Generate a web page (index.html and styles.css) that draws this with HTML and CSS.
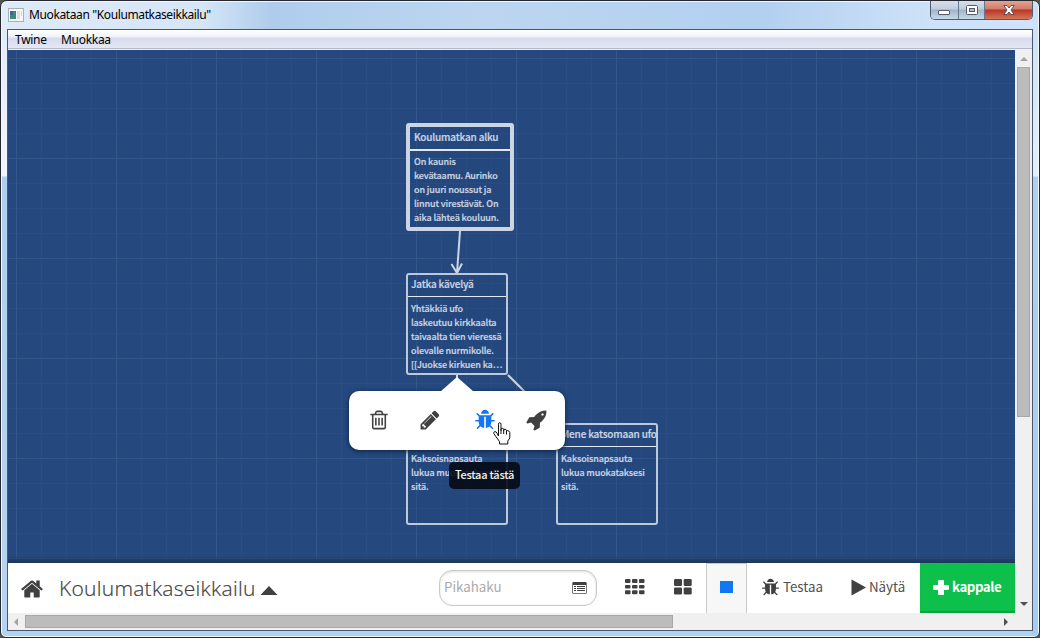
FILE: index.html
```
<!DOCTYPE html>
<html lang="fi">
<head>
<meta charset="utf-8">
<title>Muokataan "Koulumatkaseikkailu"</title>
<link rel="stylesheet" href="styles.css">
</head>
<body>
<svg class="defs" width="0" height="0">
  <symbol id="home" viewBox="0 0 1792 1792"><path d="M1472 992v480q0 26-19 45t-45 19h-384v-384h-256v384h-384q-26 0-45-19t-19-45v-480q0-1 .5-3t.5-3l575-474 575 474q1 2 1 6zm223-69l-62 74q-8 9-21 11h-3q-13 0-21-7l-692-577-692 577q-12 8-24 7-13-2-21-11l-62-74q-8-10-7-23.500t11-21.500l719-599q32-26 76-26t76 26l244 204v-195q0-14 9-23t23-9h192q14 0 23 9t9 23v408l219 182q10 8 11 21.500t-7 23.500z"/></symbol>
  <symbol id="pencil" viewBox="0 0 1792 1792"><path d="M491 1536l91-91-235-235-91 91v107h128v128h107zm523-928q0-22-22-22-10 0-17 7l-542 542q-7 7-7 17 0 22 22 22 10 0 17-7l542-542q7-7 7-17zm-54-192l416 416-832 832h-416v-416zm683 96q0 53-37 90l-166 166-416-416 166-165q36-38 90-38 53 0 91 38l235 234q37 39 37 91z"/></symbol>
  <symbol id="bug" viewBox="0 0 1792 1792"><path d="M1696 960q0 26-19 45t-45 19h-224q0 171-67 290l208 209q19 19 19 45t-19 45q-18 19-45 19t-45-19l-198-197q-5 5-15 13t-42 28.500-65 36.500-82 29-97 13v-896h-128v896q-51 0-101.500-13.500t-87-33-66-39-43.500-32.500l-15-14-183 207q-20 21-48 21-24 0-43-16-19-18-20.500-44.500t15.500-46.500l202-227q-58-114-58-274h-224q-26 0-45-19t-19-45 19-45 45-19h224v-294l-173-173q-19-19-19-45t19-45 45-19 45 19l173 173h844l173-173q19-19 45-19t45 19 19 45-19 45l-173 173v294h224q26 0 45 19t19 45zm-480-576h-640q0-133 93.500-226.500t226.500-93.500 226.500 93.500 93.500 226.500z"/></symbol>
  <symbol id="trash" viewBox="0 0 1792 1792"><path d="M704 736v576q0 14-9 23t-23 9h-64q-14 0-23-9t-9-23v-576q0-14 9-23t23-9h64q14 0 23 9t9 23zm256 0v576q0 14-9 23t-23 9h-64q-14 0-23-9t-9-23v-576q0-14 9-23t23-9h64q14 0 23 9t9 23zm256 0v576q0 14-9 23t-23 9h-64q-14 0-23-9t-9-23v-576q0-14 9-23t23-9h64q14 0 23 9t9 23zm128 724v-948h-896v948q0 22 7 40.500t14.500 27 10.500 8.500h832q3 0 10.500-8.500t14.500-27 7-40.500zm-672-1076h448l-48-117q-7-9-17-11h-317q-10 2-17 11zm928 32v64q0 14-9 23t-23 9h-96v948q0 83-47 143.500t-113 60.500h-832q-66 0-113-58.500t-47-141.500v-952h-96q-14 0-23-9t-9-23v-64q0-14 9-23t23-9h309l70-167q15-37 54-63t79-26h320q40 0 79 26t54 63l70 167h309q14 0 23 9t9 23z"/></symbol>
  <symbol id="rocket" viewBox="0 0 1792 1792"><path d="M1440 448q0-40-28-68t-68-28-68 28-28 68 28 68 68 28 68-28 28-68zm224-288q0 249-75.500 430.500t-253.500 360.500q-81 80-195 176l-20 379q-2 16-16 26l-384 224q-7 4-16 4-12 0-23-9l-64-64q-13-14-8-32l85-276-281-281-276 85q-3 1-9 1-14 0-23-9l-64-64q-17-19-5-39l224-384q10-14 26-16l379-20q96-114 176-195 188-187 358-258t431-71q14 0 24 9.500t10 22.500z"/></symbol>
</svg>
<div class="window">
  <header class="titlebar">
    <svg class="app-icon" width="16" height="14" viewBox="0 0 16 14"><path fill="#a6b0b8" d="M0 0h16v14H0z"/><path fill="#f6f7f7" d="M1 1h14v12H1z"/><path fill="#3c8a78" d="M2 3h6v8H2z"/><path fill="#3a6798" d="M2 3h3v4H2z"/><path fill="#dde0e0" d="M9 3h3v8H9z"/><path fill="#c4dcc6" d="M13 3h1v5h-1z"/></svg>
    <h1 class="win-title">Muokataan "Koulumatkaseikkailu"</h1>
    <div class="controls">
      <span class="ctl"><svg width="14" height="7" viewBox="0 0 14 7"><rect x="1.500" y="1.500" width="11" height="4" rx=".5" fill="#fff" stroke="#555a70"/></svg></span>
      <span class="ctl ctl-max"><svg width="12" height="10" viewBox="0 0 12 10"><rect x=".5" y=".5" width="11" height="9" rx="1" fill="#fff" stroke="#555a70"/><rect x="3.500" y="3.500" width="5" height="3" fill="#a9bdd3" stroke="#555a70"/></svg></span>
      <span class="ctl ctl-close"><svg width="12" height="10" viewBox="0 0 12 10"><path d="M.8.5H4L6 3l2-2.500h3.200L8 5l3.200 4.500H8L6 7 4 9.500H.8L4 5z" fill="#fff" stroke="#5a4452" stroke-width=".9"/></svg></span>
    </div>
  </header>
  <div class="client">
    <nav class="menu"><span class="m1">Twine</span><span class="m2">Muokkaa</span></nav>
    <div class="middle">
      <main class="page">
        <section class="map">
          <svg class="links" width="1007" height="513" viewBox="8 50 1007 513"><path d="M460 231l-3 42M451.500 264l5.500 9 5-9.500M457 375v48M508 375l48 48"/></svg>
          <article class="passage start"><h2>Koulumatkan alku</h2><p>On kaunis<br>kevätaamu. Aurinko<br>on juuri noussut ja<br>linnut virestävät. On<br>aika lähteä kouluun.</p></article>
          <article class="passage walk"><h2>Jatka kävelyä</h2><p>Yhtäkkiä ufo<br>laskeutuu kirkkaalta<br>taivaalta tien vieressä<br>olevalle nurmikolle.<br>[[Juokse kirkuen ka…</p></article>
          <article class="passage run"><h2></h2><p>Kaksoisnapsauta<br>lukua muokataksesi<br>sitä.</p></article>
          <article class="passage ufo"><h2>Mene katsomaan ufo</h2><p>Kaksoisnapsauta<br>lukua muokataksesi<br>sitä.</p></article>
          <div class="popup">
            <svg class="i-trash" width="22" height="22"><use href="#trash"/></svg>
            <svg class="i-pencil" width="22" height="22"><use href="#pencil"/></svg>
            <svg class="i-bug" width="22" height="22"><use href="#bug"/></svg>
            <svg class="i-rocket" width="22" height="22"><use href="#rocket"/></svg>
          </div>
          <div class="tip">Testaa tästä</div>
          <svg class="cursor" width="18" height="23" viewBox="0 0 18 23"><path fill="#fff" stroke="#111" d="M5.500 14V2.200Q5.500.7 6.700.7T8 2.200V8.500V7.500Q8 6.300 9.300 6.300T10.700 7.500V9V8.200Q10.700 7 12 7.200T13.500 8.500V10V9.200Q13.500 8.300 14.800 8.600T16.800 10.300V16L14.800 19V22H6.500V19.500L2.500 14L.8 11.500Q.4 9.800 1.800 9.600T4 11.200L5.500 14M8 8V12M10.700 8.500V12M13.500 9.500V12.500"/></svg>
        </section>
        <footer class="toolbar">
          <svg class="i-home" width="24" height="24"><use href="#home"/></svg>
          <span class="story">Koulumatkaseikkailu</span>
          <svg class="i-caret" width="18" height="10" viewBox="0 0 18 10"><path d="M9 0l8.500 9H.5z"/></svg>
          <div class="search"><span>Pikahaku</span><svg width="15" height="12" viewBox="0 0 15 12"><path d="M1 0h13l1 1v10l-1 1H1l-1-1V1z" fill="#777"/><path d="M1 0h13v3H1z"/><path d="M1 3h13v8H1z" fill="#fff"/><path d="M2 4h2v1H2zm0 2h2v1H2zm0 2h2v1H2zM5 4h8v1H5zm0 2h8v1H5zm0 2h8v1H5z"/></svg></div>
          <div class="zoom z1"><svg width="20" height="16" viewBox="0 0 20 16"><g><rect width="5.500" height="4" rx="1"/><rect x="7" width="5.500" height="4" rx="1"/><rect x="14" width="5.500" height="4" rx="1"/><rect y="6" width="5.500" height="3.500" rx="1"/><rect x="7" y="6" width="5.500" height="3.500" rx="1"/><rect x="14" y="6" width="5.500" height="3.500" rx="1"/><rect y="11.200" width="5.500" height="4" rx="1"/><rect x="7" y="11.200" width="5.500" height="4" rx="1"/><rect x="14" y="11.200" width="5.500" height="4" rx="1"/></g></svg></div>
          <div class="zoom z2"><svg width="18" height="16" viewBox="0 0 18 16"><rect width="8" height="7" rx="1.200"/><rect x="9.700" width="8" height="7" rx="1.200"/><rect y="8.400" width="8" height="7" rx="1.200"/><rect x="9.700" y="8.400" width="8" height="7" rx="1.200"/></svg></div>
          <div class="zoom z3"><i></i></div>
          <div class="action test"><svg width="19" height="19"><use href="#bug"/></svg><span>Testaa</span></div>
          <div class="action play"><svg width="16" height="17" viewBox="0 0 16 17"><path d="M.5.500L15 8.500.5 16.500z"/></svg><span>Näytä</span></div>
          <div class="add"><svg width="16" height="15" viewBox="0 0 16 15"><path d="M6 0h4a1 1 0 0 1 1 1v4h4a1 1 0 0 1 1 1v3a1 1 0 0 1-1 1h-4v4a1 1 0 0 1-1 1H6a1 1 0 0 1-1-1v-4H1a1 1 0 0 1-1-1V6a1 1 0 0 1 1-1h4V1a1 1 0 0 1 1-1z"/></svg><span>kappale</span></div>
        </footer>
      </main>
      <div class="vscroll"><svg width="8" height="5" viewBox="0 0 8 5"><path fill="#a3a3a3" d="M4 0l4 4H0z"/></svg><div class="thumb"></div><svg width="8" height="4" viewBox="0 0 8 4"><path fill="#505050" d="M0 0h8L4 4z"/></svg></div>
    </div>
    <div class="hscroll"><svg width="4" height="8" viewBox="0 0 4 8"><path fill="#a3a3a3" d="M4 0v8L0 4z"/></svg><div class="thumb"></div><svg width="4" height="8" viewBox="0 0 4 8"><path fill="#505050" d="M0 0v8l4-4z"/></svg></div>
  </div>
</div>
</body>
</html>
```
FILE: styles.css
```
* { box-sizing: border-box; }
body { margin: 0; background: #55524e; overflow: hidden; }
h1, h2, p { margin: 0; font-weight: normal; }
svg { display: block; flex: none; fill: #404040; }
.defs { position: absolute; }
.window {
  width: 1040px; height: 638px; padding: 0 6px 6px;
  border: 1px solid #25262e; border-radius: 7px 7px 6px 6px;
  box-shadow: inset 0 0 0 1px #eefaff;
  background:
    linear-gradient(#dfebf9, #f3f5fb 175px, #b0cff0 176px, #b7d3f2) 0 0 / 7px 100% no-repeat,
    linear-gradient(#c8e0f8, #e6eefa 175px, #b0cff0 176px, #a8cbf0) 100% 0 / 7px 100% no-repeat,
    linear-gradient(90deg, #dfeaf7, #d5e6f7 200px, #afcdeb 270px, #bcd6f0 480px, #b2d0ef 760px, #cde2f8 930px, #cfe4fa) 0 0 / 100% 30px no-repeat,
    #b0d2f4;
  font-family: "Noto Sans", sans-serif;
}
.titlebar { height: 28px; display: flex; align-items: flex-start; }
.app-icon { margin: 7px 0 0 1px; }
.win-title { flex: 1; margin: 5px 0 0 5px; font-size: 12px; line-height: 17px; letter-spacing: -.38px; color: #000; }
.controls { display: flex; width: 103px; height: 19px; border: 1px solid #505b70; border-top: 0; border-radius: 0 0 5px 5px; overflow: hidden; }
.ctl { width: 28px; display: flex; justify-content: center; padding-top: 8px; border-right: 1px solid #68768b; background: linear-gradient(#d6e0ec, #c0cddd 8px, #a1b4ca 9px, #c5d8ea); }
.ctl-max { width: 27px; padding-top: 4px; }
.ctl-close { width: 47px; padding-top: 4px; border: 0; background: linear-gradient(#e6a294, #d17a68 8px, #b83523 9px, #d57757); }
.client { width: 1026px; height: 602px; border: 1px solid #49586a; background: #f0f0f0; display: flex; flex-direction: column; }
.menu { height: 20px; flex: none; display: flex; font-size: 12px; line-height: 20px; letter-spacing: -.3px; color: #000; background: linear-gradient(#fff, #eff2f8 7px, #d6daec 8px, #e4e8f5 18px, #b4bac9 18px, #b4bac9 19px, #f0f0f0 19px); }
.m1 { width: 46px; margin-left: 7px; }
.middle { height: 563px; display: flex; }
.page { width: 1007px; height: 563px; }
.map {
  position: relative; height: 513px; overflow: hidden;
  background:
    linear-gradient(transparent 505px, #1d355b),
    linear-gradient(90deg, #34578a 1px, transparent 1px) 8px 0 / 100px 100%,
    linear-gradient(#34578a 1px, transparent 1px) 0 8px / 100% 100px,
    linear-gradient(90deg, #2a4e83 1px, transparent 1px) 8px 0 / 25px 100%,
    linear-gradient(#2a4e83 1px, transparent 1px) 0 8px / 100% 25px,
    #25497f;
  font-family: "Noto Sans CJK SC", "Noto Sans", sans-serif;
}
.links { position: absolute; fill: none; stroke: #cbd5e3; stroke-width: 2; }
.passage { position: absolute; width: 102px; height: 102px; border: 2px solid #bdc8d9; border-radius: 3px; color: #cbd5e3; -webkit-text-stroke: .2px #cbd5e3; background: #25497f55; overflow: hidden; }
.passage h2 { height: 22px; padding-left: 3px; border-bottom: 1px solid #e4eaf1; font-size: 10px; line-height: 18px; font-weight: 500; letter-spacing: -.19px; white-space: nowrap; }
.passage p { padding: 5px 0 0 3px; font-size: 9px; line-height: 14px; font-weight: 500; letter-spacing: -.12px; white-space: nowrap; }
.start { left: 398px; top: 73px; width: 108px; height: 108px; border: 4px solid #cbd5e3; }
.start h2 { height: 24px; line-height: 20px; padding-left: 4px; border-width: 2px; }
.start p { padding: 4px 0 0 4px; }
.walk { left: 398px; top: 223px; }
.run { left: 398px; top: 373px; }
.ufo { left: 548px; top: 373px; }
.popup { position: absolute; left: 341px; top: 341px; width: 216px; height: 59px; border-radius: 10px; background: #fff; display: flex; align-items: center; padding: 0 0 2px 19px; box-shadow: 0 1px 5px #0c1d38; }
.popup::before { content: ""; position: absolute; left: 91px; top: -14px; border: solid transparent; border-width: 0 17px 15px; border-bottom-color: #fff; }
.i-pencil { margin-left: 29px; }
.i-bug { margin-left: 32.500px; fill: #1277f0; }
.i-rocket { margin-left: 30px; }
.tip { position: absolute; left: 441px; top: 412px; width: 71px; height: 27px; border-radius: 5px; background: #050b16e8; color: #f2f2f2; font-size: 11px; line-height: 25px; letter-spacing: -.25px; text-align: center; font-weight: 500; white-space: nowrap; }
.cursor { position: absolute; left: 485px; top: 372px; }
.toolbar { height: 50px; display: flex; align-items: center; background: #fff; color: #505050; font: 14px/48px "Noto Sans CJK SC", "Noto Sans", sans-serif; }
.toolbar span { padding-bottom: 2px; }
.i-home { margin: 2px 0 0 12px; }
.toolbar .story { width: 199px; margin-left: 15px; padding-bottom: 0; font-family: "Open Sans", "Noto Sans", sans-serif; font-size: 21px; font-weight: 300; letter-spacing: .27px; -webkit-text-stroke: .2px #404040; white-space: nowrap; color: #404040; }
.i-caret { margin: 6px 0 0 2px; }
.search { width: 158px; height: 36px; margin-left: 161px; border: 1px solid #c8c8c8; border-radius: 13px; box-shadow: inset 0 1px 3px #ddd; display: flex; align-items: center; justify-content: space-between; padding: 0 9px 0 4px; color: #aaa; line-height: 32px; font-size: 13.300px; }
.zoom { display: flex; align-items: center; justify-content: center; height: 50px; }
.zoom svg { margin-bottom: 3px; }
.z1 { width: 48px; margin-left: 14px; }
.z2 { width: 47px; }
.z3 { width: 41px; border: solid #c9c9c9; border-width: 1px 1px 0; background: #f7f7f7; }
.z3 i { width: 13px; height: 12px; background: #1277f0; margin-bottom: 3px; }
.action { display: flex; align-items: center; white-space: nowrap; font-size: 13.300px; }
.test { width: 89px; padding-left: 14px; }
.test span { margin-left: 3px; }
.play { width: 84px; padding-left: 15px; }
.play span { margin-left: 2px; }
.action svg { margin-bottom: 2px; }
.add { width: 95px; height: 50px; display: flex; align-items: center; padding-left: 13px; background: #0dc04b; box-shadow: inset 0 -2px 1px #0ba33f; color: #fff; font-weight: 700; font-size: 13.300px; letter-spacing: -.45px; }
.add svg { fill: #fff; margin-right: 3px; margin-bottom: 2px; }
.vscroll { width: 17px; display: flex; flex-direction: column; align-items: center; background: #f0f0f0; padding-top: 7px; }
.thumb { background: #bcbcbc; border: 1px solid #a8a8a8; }
.vscroll .thumb { width: 13px; height: 350px; margin: 5px 0 185px; }
.hscroll { height: 17px; display: flex; align-items: center; padding-left: 6px; background: #f0f0f0; }
.hscroll .thumb { width: 648px; height: 13px; margin: 0 331px 0 7px; }
```
